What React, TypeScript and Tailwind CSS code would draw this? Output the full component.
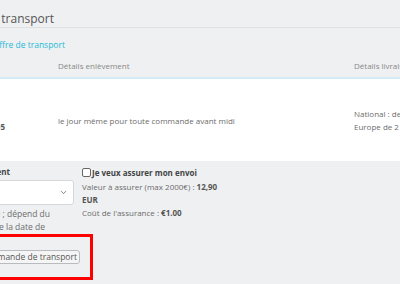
import React from "react";
import { ChevronDown } from "lucide-react";

export default function App() {
    return (
        <div className="w-[400px] h-[284px] overflow-hidden bg-[#eff0f2] font-['Open_Sans',sans-serif] text-[8px] text-[#6c6c6c]">
            {/* titre */}
            <div className="h-[28px] pt-[11px] border-b border-[#dfe0e2] flex">
                <div className="w-[54px] flex justify-end whitespace-nowrap shrink-0">
                    <span className="text-[12px] leading-[16px] text-[#555]">Offre de transport</span>
                </div>
            </div>
            <div className="h-[27px] pt-[11px] flex">
                <div className="w-[65px] flex justify-end whitespace-nowrap shrink-0">
                    <span className="text-[#25b9d7] text-[8.5px] leading-[12px]">Votre offre de transport</span>
                </div>
            </div>

            {/* tableau */}
            <div className="flex h-[24px] items-center border-b-2 border-[#d3ebf4] text-[#888] whitespace-nowrap">
                <div className="w-[58px] shrink-0"></div>
                <div className="w-[296px] shrink-0">Détails enlèvement</div>
                <div>Détails livraison</div>
            </div>
            <div className="flex h-[82px] items-center bg-white whitespace-nowrap leading-[13px]">
                <div className="w-[58px] shrink-0 flex flex-col">
                    <div>&nbsp;</div>
                    <div className="w-[5px] flex justify-end">
                        <span className="font-bold text-[#555]">Colis 2,95</span>
                    </div>
                </div>
                <div className="w-[296px] shrink-0">le jour même pour toute commande avant midi</div>
                <div className="flex flex-col">
                    <div>National : de 1 à 2 jours</div>
                    <div>Europe de 2 à 5 jours</div>
                </div>
            </div>

            {/* options */}
            <div className="flex pt-[4px]">
                <div className="w-[82px] shrink-0 flex flex-col">
                    <div className="w-[10px] flex justify-end whitespace-nowrap h-[14px] items-center">
                        <span className="font-bold text-[#444]">Date d'enlèvement</span>
                    </div>
                    <div className="w-[74px] flex justify-end mt-[1px]">
                        <div className="w-[120px] shrink-0 h-[25px] bg-white border border-[#d5d7db] rounded-[3px] flex items-center justify-end pr-[5px]">
                            <ChevronDown size={9} strokeWidth={2} className="text-[#555]" />
                        </div>
                    </div>
                    <div className="mt-[2px] leading-[13px] whitespace-nowrap text-[8.5px]">
                        <div className="w-[50px] flex justify-end">
                            <span>Heure estimée ; dépend du</span>
                        </div>
                        <div className="w-[45px] flex justify-end">
                            <span>transporteur et de la date de</span>
                        </div>
                    </div>
                    <div className="w-[93px] flex justify-end mt-[1px]">
                        <div className="w-[140px] shrink-0 h-[46px] border-[3px] border-[#ff0000] flex items-center justify-end pr-[10px]">
                            <button className="h-[14px] px-[2px] bg-[#f5f5f5] border border-[#b8bbc0] rounded-[3px] text-[#555] whitespace-nowrap leading-[12px] text-[8.5px]">
                                Valider la commande de transport
                            </button>
                        </div>
                    </div>
                </div>
                <div className="flex flex-col leading-[13px] whitespace-nowrap">
                    <div className="flex items-center h-[14px]">
                        <span className="w-[9px] h-[9px] border border-[#666] rounded-[2px] bg-white"></span>
                        <span className="font-bold text-[#444] ml-[1px]">Je veux assurer mon envoi</span>
                    </div>
                    <div className="mt-[1px]">Valeur à assurer (max 2000€) : <b className="text-[#555]">12,90</b></div>
                    <div className="font-bold text-[#555]">EUR</div>
                    <div>Coût de l'assurance : <b className="text-[#555]">€1.00</b></div>
                </div>
            </div>
        </div>
    );
}
